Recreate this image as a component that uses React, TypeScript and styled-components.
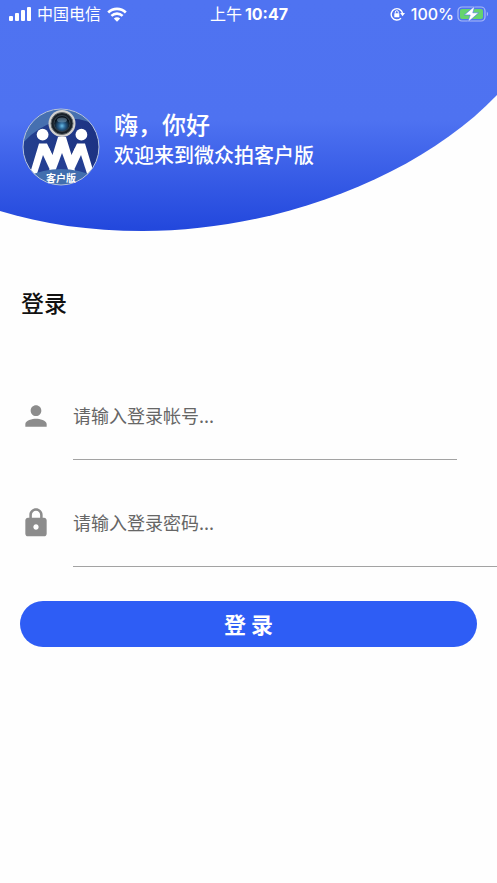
import React from "react";
import styled, { createGlobalStyle } from "styled-components";
import { MdLock, MdPerson } from "react-icons/md";

const GlobalStyle = createGlobalStyle`
  *, *::before, *::after { box-sizing: border-box; }
  body {
    margin: 0;
    background: #fefefe;
    font-family: Inter, "Noto Sans CJK SC", sans-serif;
    overflow-x: hidden;
  }
`;

const Header = styled.header`
  position: relative;
  height: 232px;
  color: #fff;
`;

const HeaderShape = styled.svg`
  position: absolute;
  inset: 0;
  width: 100%;
  height: 100%;
  z-index: -1;
`;

const StatusBar = styled.div`
  display: grid;
  grid-template-columns: 1fr auto 1fr;
  align-items: center;
  height: 28px;
  padding: 0 8px 0 9px;
  font-size: 16px;
  line-height: 28px;
  white-space: nowrap;
`;

const StatusGroup = styled.div<{ $end?: boolean }>`
  display: flex;
  align-items: center;
  justify-content: ${(p) => (p.$end ? "flex-end" : "flex-start")};
  gap: 6px;
`;

const Power = styled.div`
  display: flex;
  align-items: center;
  gap: 3px;
  font-weight: 500;
`;

const Clock = styled.time`
  display: flex;
  gap: 3px;
  b { font-weight: 700; }
`;

const Welcome = styled.div`
  display: flex;
  align-items: flex-start;
  gap: 14px;
  padding: 80px 22px 0;
`;

const Logo = styled.svg`
  flex: none;
  width: 78px;
  height: 78px;
`;

const Greeting = styled.h1`
  margin: 0;
  padding-top: 2px;
  font-size: 24px;
  line-height: 32px;
  font-weight: 500;
`;

const Subtitle = styled.p`
  margin: 0;
  font-size: 20px;
  line-height: 28px;
  font-weight: 500;
`;

const Form = styled.form`
  padding: 56px 20px 0;
`;

const Title = styled.h2`
  margin: 0 0 69px 1px;
  font-size: 23px;
  line-height: 32px;
  font-weight: 500;
  color: #111;
`;

const Field = styled.div<{ $bleed?: boolean }>`
  display: flex;
  align-items: flex-start;
  gap: 21px;
  height: 71px;
  margin: 0 ${(p) => (p.$bleed ? "-20px" : "20px")} 36px 0;
`;

const FieldIcon = styled.label`
  display: flex;
  align-items: center;
  height: 54px;
  color: #8c8c8c;
`;

const TextInput = styled.input`
  flex: 1;
  min-width: 0;
  height: 71px;
  padding: 0 0 18px;
  border: 0;
  border-bottom: 1px solid #a3a3a3;
  border-radius: 0;
  outline: 0;
  background: transparent;
  font-family: "Noto Sans CJK SC", sans-serif;
  font-size: 18px;
  color: #333;
  &::placeholder { color: #666; opacity: 1; }
`;

const Submit = styled.button`
  display: block;
  width: 100%;
  height: 46px;
  margin-top: -2px;
  padding: 0 0 2px;
  border: 0;
  border-radius: 23px;
  background: #2e5df5;
  color: #fff;
  font-family: "Noto Sans CJK SC", sans-serif;
  font-size: 22px;
  line-height: 44px;
  font-weight: 700;
  cursor: pointer;
`;

const Signal = () => (
  <svg width="22" height="14" viewBox="0 0 22 14" fill="#fff" aria-hidden="true">
    <rect x="0" y="9" width="4" height="5" rx="1" />
    <rect x="6" y="6" width="4" height="8" rx="1" />
    <rect x="12" y="3" width="4" height="11" rx="1" />
    <rect x="18" y="0" width="4" height="14" rx="1" />
  </svg>
);

const Wifi = () => (
  <svg width="20" height="15" viewBox="0 0 20 15" fill="none" aria-hidden="true">
    <path d="M1.2 5.5C6.2 .7 13.8 .7 18.8 5.5" stroke="#fff" strokeWidth="2.7" />
    <path d="M4.4 8.9C7.6 5.9 12.4 5.9 15.6 8.9" stroke="#fff" strokeWidth="2.6" />
    <path d="M10 14.7L6.8 11.4C8.6 9.8 11.4 9.8 13.2 11.4Z" fill="#fff" />
  </svg>
);

const RotationLock = () => (
  <svg width="15" height="14" viewBox="0 0 15 14" fill="none" aria-hidden="true">
    <path d="M11 11.3A5.7 5.7 0 1 1 12.5 6.2" stroke="#fff" strokeWidth="1.4" />
    <path d="M10.1 6H15L12.6 9.3Z" fill="#fff" />
    <rect x="4.3" y="6.3" width="5" height="3.9" rx=".5" fill="#fff" />
    <path d="M5.3 6.5V5.2A1.5 1.5 0 0 1 8.3 5.2V6.5" stroke="#fff" />
  </svg>
);

const Battery = () => (
  <svg width="32" height="18" viewBox="0 0 32 18" fill="none" aria-hidden="true">
    <rect x="1" y="2" width="27" height="14" rx="4" stroke="#a9b9f8" strokeWidth="1.2" />
    <rect x="3" y="4" width="23" height="10" rx="2" fill="#65d36e" />
    <path d="M29.8 6.5Q32.3 9 29.8 11.5Z" fill="#a9b9f8" />
    <path d="M17.8 1L7.3 10H13.2L10.8 17.3L21.7 7.8H15.8Z" fill="#fff" stroke="#4f73f1" strokeWidth=".6" />
  </svg>
);

const AppLogo = () => (
  <Logo viewBox="0 0 78 78" role="img" aria-label="微众拍客户版">
    <defs>
      <clipPath id="logoDisc"><circle cx="39" cy="39" r="38" /></clipPath>
      <linearGradient id="logoBlue" x1="0" y1="0" x2="1" y2="0">
        <stop offset="0" stopColor="#24408f" />
        <stop offset="1" stopColor="#1c3283" />
      </linearGradient>
      <radialGradient id="lensGlass" cy=".65">
        <stop offset="0" stopColor="#6bbfe9" />
        <stop offset=".4" stopColor="#2a6392" />
        <stop offset="1" stopColor="#09131e" />
      </radialGradient>
    </defs>
    <g clipPath="url(#logoDisc)">
      <rect width="78" height="78" fill="url(#logoBlue)" />
      <path d="M0 0H78V20Q58 6 36 13Q14 19 0 36Z" fill="#4670b0" />
      <g fill="#fff">
        <circle cx="20.6" cy="26.7" r="5.9" />
        <circle cx="59.4" cy="26.7" r="5.9" />
        <path d="M6 72L17 35.5H25L30.5 47L36 29H44L49.5 47L55 35.5H63L74 72Z" />
      </g>
      <g fill="#243f93">
        <path d="M21 47L27.5 61L24 72H13Z" />
        <path d="M40 45L50 72H30Z" />
        <path d="M59 47L52.5 61L56 72H67Z" />
      </g>
      <path d="M27 40L31 49L29.5 53L24.5 41ZM53 40L49 49L50.5 53L55.5 41Z" fill="#fff" />
      <path d="M4 69Q39 53 74 69V78H4Z" fill="#416eae" />
    </g>
    <circle cx="39" cy="39" r="38" fill="none" stroke="#b6c4dc" />
    <circle cx="40" cy="15.5" r="13.5" fill="#d2d1cf" />
    <circle cx="40" cy="15.5" r="11" fill="#182028" stroke="#666d71" />
    <circle cx="40" cy="15.5" r="8" fill="url(#lensGlass)" stroke="#35434e" />
    <ellipse cx="40" cy="12" rx="5" ry="2.5" fill="#8bafc8" opacity=".45" />
    <text x="39" y="73.5" textAnchor="middle" fill="#fff" fontFamily="Noto Sans CJK SC, sans-serif" fontSize="10" fontWeight="700">客户版</text>
  </Logo>
);

export default function App() {
  return (
    <>
      <GlobalStyle />
      <Header>
        <HeaderShape viewBox="0 0 497 232" preserveAspectRatio="none" aria-hidden="true">
          <defs>
            <linearGradient id="headerBlue" x1="0" y1="0" x2="0" y2="1">
              <stop offset="0" stopColor="#4f73f1" />
              <stop offset=".52" stopColor="#4e72f1" />
              <stop offset="1" stopColor="#2247dc" />
            </linearGradient>
          </defs>
          <path d="M0 0H497V95C420 176 278 231 143 231C90 231 42 224 0 211Z" fill="url(#headerBlue)" />
        </HeaderShape>
        <StatusBar>
          <StatusGroup>
            <Signal />
            <span>中国电信</span>
            <Wifi />
          </StatusGroup>
          <Clock>上午<b>10:47</b></Clock>
          <StatusGroup $end>
            <RotationLock />
            <Power>
              <span>100%</span>
              <Battery />
            </Power>
          </StatusGroup>
        </StatusBar>
        <Welcome>
          <AppLogo />
          <div>
            <Greeting>嗨，你好</Greeting>
            <Subtitle>欢迎来到微众拍客户版</Subtitle>
          </div>
        </Welcome>
      </Header>
      <main>
        <Form onSubmit={(e) => e.preventDefault()}>
          <Title>登录</Title>
          <Field>
            <FieldIcon htmlFor="account" aria-label="登录帐号"><MdPerson size={32} /></FieldIcon>
            <TextInput id="account" type="text" placeholder="请输入登录帐号..." />
          </Field>
          <Field $bleed>
            <FieldIcon htmlFor="password" aria-label="登录密码"><MdLock size={32} /></FieldIcon>
            <TextInput id="password" type="password" placeholder="请输入登录密码..." />
          </Field>
          <Submit type="submit">登 录</Submit>
        </Form>
      </main>
    </>
  );
}
